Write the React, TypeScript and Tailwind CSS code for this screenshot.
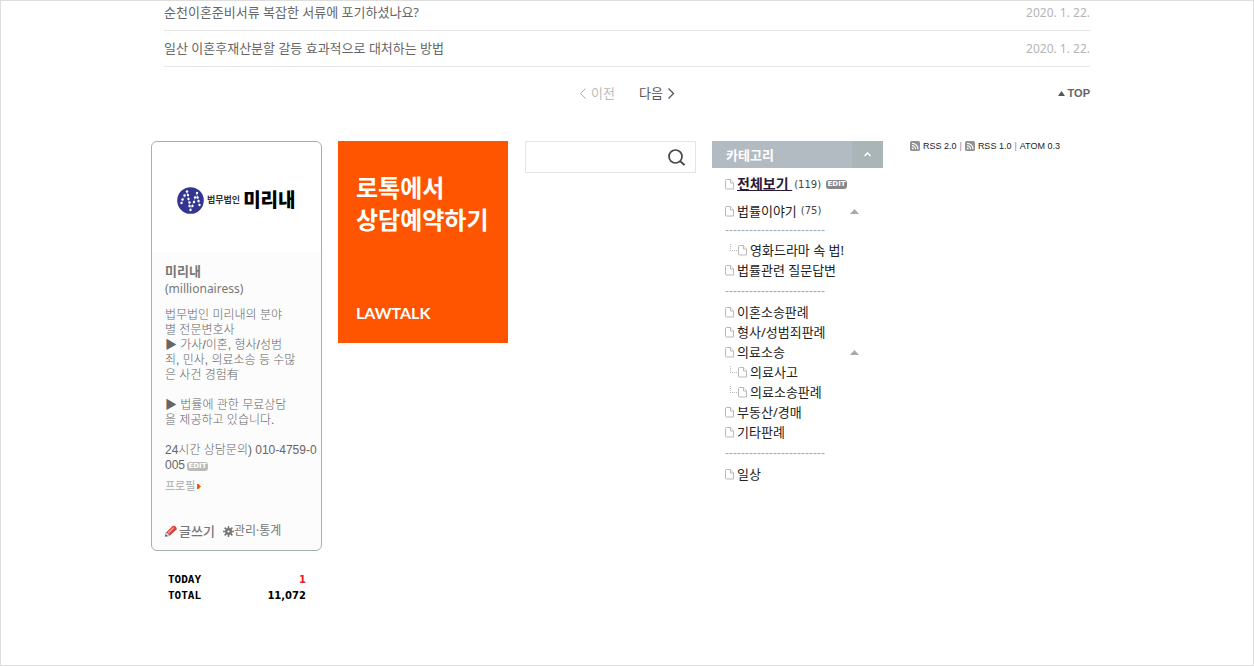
import { Fragment, useState } from "react";

interface Post {
  title: string;
  date: string;
}

interface Category {
  name: string;
  count?: number;
  depth?: number;
  opened?: boolean;
}

const posts: Post[] = [
  { title: "순천이혼준비서류 복잡한 서류에 포기하셨나요?", date: "2020. 1. 22." },
  {
    title: "일산 이혼후재산분할 갈등 효과적으로 대처하는 방법",
    date: "2020. 1. 22.",
  },
];

// Groups are separated by a dashed entry
const categoryGroups: Category[][] = [
  [{ name: "영화드라마 속 법!", depth: 1 }, { name: "법률관련 질문답변" }],
  [
    { name: "이혼소송판례" },
    { name: "형사/성범죄판례" },
    { name: "의료소송", opened: true },
    { name: "의료사고", depth: 1 },
    { name: "의료소송판례", depth: 1 },
    { name: "부동산/경매" },
    { name: "기타판례" },
  ],
  [{ name: "일상" }],
];

const intro = [
  "법무법인 미리내의 분야",
  "별 전문변호사",
  "▶ 가사/이혼, 형사/성범",
  "죄, 민사, 의료소송 등 수많",
  "은 사건 경험有",
  "",
  "▶ 법률에 관한 무료상담",
  "을 제공하고 있습니다.",
  "",
];

function PageIcon() {
  return (
    <svg
      width="10"
      height="11"
      viewBox="0 0 10 11"
      fill="#fff"
      stroke="#b9b9b9"
      className="shrink-0"
    >
      <path d="M1.5.5h4l3 3.5v6h-7a1 1 0 0 1-1-1v-7.500a1 1 0 0 1 1-1z" />
      <path d="M5.500.5v3.500h3" />
    </svg>
  );
}

function BranchIcon() {
  return (
    <svg width="9" height="13" viewBox="0 0 9 13" className="shrink-0">
      <path
        d="M1.500 0v6M1 6.500h8"
        fill="none"
        stroke="#bbb"
        strokeDasharray="1 1"
      />
    </svg>
  );
}

function CollapseIcon() {
  return (
    <svg width="9" height="5" viewBox="0 0 9 5">
      <path d="M0 5 4.500 0 9 5z" fill="#a9a9a9" />
    </svg>
  );
}

function RssIcon() {
  return (
    <svg width="10" height="10" viewBox="0 0 10 10">
      <rect width="10" height="10" rx="1.500" fill="#929292" />
      <path
        d="M2 2.200a6 6 0 0 1 6 6M2 4.600a3.600 3.600 0 0 1 3.600 3.600"
        fill="none"
        stroke="#fff"
        strokeWidth="1.100"
      />
      <circle cx="2.800" cy="7.400" r=".9" fill="#fff" />
    </svg>
  );
}

function PencilIcon() {
  return (
    <svg width="12" height="12" viewBox="0 0 12 12">
      <path d="M1 7.500 7.500 1q2-.8 3.500 1t0 3L5 10.500z" fill="#d6423b" />
      <path d="M2.500 7.500 8 2l1.200 1L3.800 8.700z" fill="#f19b93" />
      <path d="M1 7.500.5 11.500l4.500-1z" fill="#eee" stroke="#888" strokeWidth=".6" />
      <path d="M.5 9.500v2l2.200-.4z" fill="#333" />
    </svg>
  );
}

function GearIcon() {
  return (
    <svg width="11" height="11" viewBox="0 0 11 11" stroke="#777">
      <path
        d="M5.500 0v11M0 5.500h11M1.600 1.600l7.800 7.800M9.400 1.600 1.600 9.400"
        strokeWidth="1.500"
      />
      <circle cx="5.500" cy="5.500" r="2.300" fill="#fff" strokeWidth="2.400" />
    </svg>
  );
}

function LogoMark() {
  const dots = [
    [4.5, 16], [5.5, 12.5], [7.500, 8.5], [10, 4.500], [11, 8], [11.5, 12],
    [12.5, 15.500], [12.5, 19], [13.500, 23], [15.500, 19], [17, 15], [18, 10.5],
    [20, 6], [20.5, 10.500], [21.5, 14], [22.5, 18],
  ];
  return (
    <svg width="27" height="27" viewBox="0 0 27 27" className="shrink-0">
      <circle cx="13.500" cy="13.500" r="13.300" fill="#34358f" />
      <path
        d="M4.500 16 10 4.500 13.500 23 20 6l2.500 12"
        fill="none"
        stroke="#7b7cc0"
        strokeWidth=".8"
      />
      {dots.map(([x, y]) => (
        <circle key={`${x}-${y}`} cx={x} cy={y} r="1.200" fill="#fff" />
      ))}
    </svg>
  );
}

function EditButton({ className }: { className: string }) {
  return (
    <button
      type="button"
      className={`h-[9px] w-[21px] rounded-[3px] text-center font-['DejaVu_Sans'] text-[7px] leading-[9px] font-bold text-white ${className}`}
    >
      EDIT
    </button>
  );
}

function Divider() {
  return (
    <li className="h-[22px] font-['Liberation_Sans',sans-serif] text-[12px] leading-[22px] text-[#aaa] nth-2:h-[19px] nth-2:leading-[18px]">
      -------------------------
    </li>
  );
}

function CategoryRow({ item }: { item: Category }) {
  return (
    <li
      className={`flex h-5 items-center text-[13px] leading-5 text-[#222] ${
        item.depth ? "pl-1" : ""
      }`}
    >
      {item.depth && <BranchIcon />}
      <PageIcon />
      <a href="#" className="ml-0.5 whitespace-nowrap">
        {item.name}
      </a>
      {item.count && (
        <span className="ml-1 font-['DejaVu_Sans'] text-[10px] text-[#444]">
          ({item.count})
        </span>
      )}
      {item.opened && (
        <button type="button" aria-label="접기" className="mr-6 ml-auto">
          <CollapseIcon />
        </button>
      )}
    </li>
  );
}

function ProfileCard() {
  return (
    <div className="rounded-md border border-[#a3b0b0] bg-[#fcfcfc] pb-[9px] text-[#777]">
      <div className="flex h-[110px] items-center gap-[3px] rounded-t-md bg-white pt-1.5 pl-[25px] whitespace-nowrap">
        <LogoMark />
        <span className="text-[9px] font-bold text-[#333]">법무법인</span>
        <span className="text-[19px] leading-5 font-black text-black">
          미리내
        </span>
      </div>
      <div className="px-[13px]">
        <p className="mt-2.5 text-[13px] leading-[18px] font-bold">미리내</p>
        <p className="text-[12px] leading-[18px]">(millionairess)</p>
        <p className="mt-2.5 font-['Liberation_Sans','Noto_Sans_CJK_KR',sans-serif] text-[12px] leading-[15px] font-light whitespace-nowrap text-[#666]">
          {intro.map((line, i) => (
            <span key={i}>
              {line}
              <br />
            </span>
          ))}
          <span className="font-['Liberation_Sans_Narrow','Liberation_Sans','Noto_Sans_CJK_KR',sans-serif]">
            24시간 상담문의) 010-4759-0
            <br />
            005
          </span>
          <EditButton className="ml-0.5 bg-[#bbb] align-[1px]" />
        </p>
        <a
          href="#"
          className="mt-1 flex items-center gap-0.5 text-[11px] leading-[18px] text-[#aaa]"
        >
          프로필
          <svg width="4" height="5" viewBox="0 0 4 5">
            <path d="M0 0h1.500L4 2.500 1.500 5H0z" fill="#e8590c" />
          </svg>
        </a>
        <div className="mt-[26px] flex items-center text-[13px] leading-5">
          <PencilIcon />
          <a href="#" className="ml-0.5 font-medium">
            글쓰기
          </a>
          <span className="ml-2">
            <GearIcon />
          </span>
          <a href="#" className="text-[12px]">
            관리·통계
          </a>
        </div>
      </div>
    </div>
  );
}

function Counter() {
  return (
    <dl className="mt-[21px] grid grid-cols-2 pr-4 pl-[17px] font-['DejaVu_Sans'] text-[10px] leading-4 font-bold text-black">
      <dt className="font-['DejaVu_Sans_Mono'] text-[11px]">TODAY</dt>
      <dd className="text-right text-[#ed1c24]">1</dd>
      <dt className="font-['DejaVu_Sans_Mono'] text-[11px]">TOTAL</dt>
      <dd className="text-right">11,072</dd>
    </dl>
  );
}

function CategoryBox() {
  return (
    <div>
      <div className="flex h-[27px] items-stretch bg-[#b2bbc1] text-white">
        <h2 className="flex-1 pl-[14px] text-[13px] leading-[29px] font-bold">
          카테고리
        </h2>
        <button
          type="button"
          aria-label="카테고리 접기"
          className="flex w-[31px] items-center justify-center bg-[#a9b5b6]"
        >
          <svg width="7" height="5" viewBox="0 0 7 5">
            <path
              d="M.5 4 3.500 1l3 3"
              fill="none"
              stroke="#fff"
              strokeWidth="1.500"
            />
          </svg>
        </button>
      </div>
      <div className="mt-1.5 flex h-5 items-center pl-[13px]">
        <PageIcon />
        <a
          href="#"
          className="ml-0.5 text-[14px] leading-5 font-bold whitespace-pre text-[#2b1a35] underline"
        >
          {"전체보기 "}
        </a>
        <span className="ml-0.5 font-['DejaVu_Sans'] text-[10px] text-[#444]">
          (119)
        </span>
        <EditButton className="ml-[5px] bg-[#888]" />
      </div>
      <ul className="mt-[7px] pl-[13px]">
        <CategoryRow item={{ name: "법률이야기", count: 75, opened: true }} />
        {categoryGroups.map((group) => (
          <Fragment key={group[0].name}>
            <Divider />
            {group.map((item) => (
              <CategoryRow key={item.name} item={item} />
            ))}
          </Fragment>
        ))}
      </ul>
    </div>
  );
}

export default function App() {
  const [query, setQuery] = useState("");

  return (
    <div className="min-h-screen border border-[#ddd] bg-white font-['Noto_Sans','Noto_Sans_CJK_KR',sans-serif]">
      <div className="mx-auto w-full max-w-[952px]">
        <div className="px-[13px]">
          <ul>
            {posts.map((post) => (
              <li
                key={post.title}
                className="flex justify-between border-b border-[#e6e6e6] py-1.5 text-[13px] leading-[23px] first:pt-0"
              >
                <a href="#" className="text-[#666]">
                  {post.title}
                </a>
                <span className="text-[12px] text-[#b5b5b5]">{post.date}</span>
              </li>
            ))}
          </ul>

          <div className="grid grid-cols-[1fr_auto_1fr] items-center pt-[14px] pb-9 text-[13px] leading-6">
            <nav className="col-start-2 flex gap-6">
              <a href="#" className="flex items-center gap-1 text-[#bbb]">
                <svg width="8" height="11" viewBox="0 0 8 11">
                  <path d="M6.500.5l-5 5 5 5" fill="none" stroke="#aaa" />
                </svg>
                이전
              </a>
              <a href="#" className="flex items-center gap-1 text-[#555]">
                다음
                <svg width="8" height="11" viewBox="0 0 8 11">
                  <path
                    d="M1.500.5l5 5-5 5"
                    fill="none"
                    stroke="#555"
                    strokeWidth="1.300"
                  />
                </svg>
              </a>
            </nav>
            <a
              href="#"
              className="flex items-center gap-[3px] justify-self-end font-['Liberation_Sans',sans-serif] text-[11px] font-bold text-[#666]"
            >
              <svg width="7" height="5" viewBox="0 0 7 5">
                <path d="M0 5 3.500 0 7 5z" fill="#555" />
              </svg>
              TOP
            </a>
          </div>
        </div>

        <div className="flex items-start gap-4">
          <div className="w-[171px] shrink-0">
            <ProfileCard />
            <Counter />
          </div>

          {/* 상담 배너 */}
          <div className="w-[171px] shrink-0">
            <a
              href="#"
              className="mr-px flex h-[202px] flex-col justify-between bg-[#ff5500] px-[18px] pt-[31px] pb-[18px] whitespace-nowrap text-white"
            >
              <span className="text-[24px] leading-8 font-bold">
                로톡에서
                <br />
                상담예약하기
              </span>
              <span className="font-['Lato',sans-serif] text-[16px] leading-6 font-bold">
                LAWTALK
              </span>
            </a>
          </div>

          <form
            className="flex h-8 w-[171px] shrink-0 border border-[#e5e5e5]"
            onSubmit={(e) => e.preventDefault()}
          >
            <input
              type="text"
              aria-label="검색"
              value={query}
              onChange={(e) => setQuery(e.target.value)}
              className="min-w-0 flex-1 px-2 text-[13px] outline-none"
            />
            <button
              type="submit"
              aria-label="검색하기"
              className="flex w-[37px] items-center justify-center"
            >
              <svg
                width="17"
                height="17"
                viewBox="0 0 17 17"
                fill="none"
                stroke="#444"
                strokeWidth="1.700"
              >
                <circle cx="7.500" cy="7.500" r="6.500" />
                <path d="M12 12l4.500 4" />
              </svg>
            </button>
          </form>

          <div className="w-[171px] shrink-0">
            <CategoryBox />
          </div>

          <div className="flex items-center pl-[11px] font-['Liberation_Sans',sans-serif] text-[9px] leading-[10px] whitespace-nowrap text-[#222]">
            <RssIcon />
            <a href="#" className="ml-[3px]">
              RSS 2.0
            </a>
            <span className="mx-[3px] text-[#888]">|</span>
            <RssIcon />
            <a href="#" className="ml-[3px]">
              RSS 1.0
            </a>
            <span className="mx-[3px] text-[#888]">|</span>
            <a href="#">ATOM 0.3</a>
          </div>
        </div>
      </div>
    </div>
  );
}
